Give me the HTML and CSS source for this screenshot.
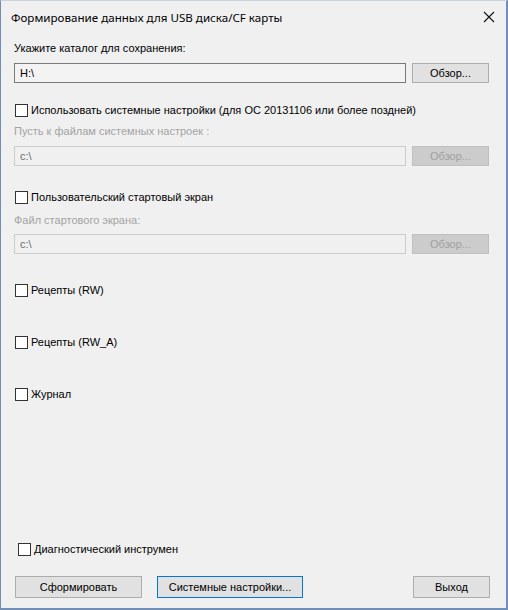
FILE: index.html
```html
<!DOCTYPE html>
<html lang="ru">

<head>
  <meta charset="UTF-8">
  <title>Формирование данных для USB диска/CF карты</title>
  <link rel="stylesheet" href="styles.css">
</head>

<body>
  <div class="window">
    <div class="titlebar">
      <span class="title">Формирование данных для USB диска/CF карты</span>
      <svg class="close" width="12" height="12" viewBox="0 0 12 12">
        <path d="M1 1 L11 11 M11 1 L1 11" stroke="#111" stroke-width="1.1" fill="none" />
      </svg>
    </div>

    <div class="content">
      <div class="label">Укажите каталог для сохранения:</div>
      <div class="path-row">
        <div class="field">H:\</div>
        <div class="btn">Обзор...</div>
      </div>

      <label class="check first-check"><span class="box"></span>Использовать системные настройки (для ОС 20131106 или более поздней)</label>
      <div class="label disabled">Пусть к файлам системных настроек :</div>
      <div class="path-row">
        <div class="field disabled">c:\</div>
        <div class="btn disabled">Обзор...</div>
      </div>

      <label class="check section-check"><span class="box"></span>Пользовательский стартовый экран</label>
      <div class="label disabled">Файл стартового экрана:</div>
      <div class="path-row tight">
        <div class="field disabled">c:\</div>
        <div class="btn disabled">Обзор...</div>
      </div>

      <label class="check recipe-check"><span class="box"></span>Рецепты (RW)</label>
      <label class="check spaced-check"><span class="box"></span>Рецепты (RW_A)</label>
      <label class="check spaced-check"><span class="box"></span>Журнал</label>

      <div class="spacer"></div>

      <label class="check diag-check"><span class="box"></span>Диагностический инструмен</label>

      <div class="footer">
        <div class="btn wide">Сформировать</div>
        <div class="btn default">Системные настройки...</div>
        <div class="btn exit">Выход</div>
      </div>
    </div>
  </div>
</body>

</html>
```

FILE: styles.css
```css
body {
  margin: 0;
  font-family: 'Liberation Sans', Arial, sans-serif;
  font-size: 11px;
  color: #000;
  background: #f0f0f0;
}

.window {
  width: 508px;
  height: 610px;
  box-sizing: border-box;
  background: #f0f0f0;
  border: 1px solid #6f8fb8;
  border-top-color: #c9d3df;
  border-right-width: 2px;
  border-bottom-width: 2px;
  display: flex;
  flex-direction: column;
}

.titlebar {
  height: 31px;
  display: flex;
  align-items: center;
  padding: 0 10px 0 10px;
  justify-content: space-between;
}

.title {
  font-family: 'Noto Sans', sans-serif;
  font-size: 11.6px;
  padding-top: 2px;
}

.close {
  margin-right: 1px;
  margin-top: 1px;
}

.content {
  flex: 1;
  display: flex;
  flex-direction: column;
  padding: 8px 17px 10px 13px;
}

.label {
  height: 16px;
  line-height: 16px;
}

.disabled {
  color: #a3a3a3;
}

.path-row {
  display: flex;
  gap: 6px;
  margin-top: 7px;
}

.path-row.tight {
  margin-top: 6px;
}

.field {
  flex: 1;
  height: 20px;
  box-sizing: border-box;
  border: 1px solid #7a7a7a;
  background: #f3f3f3;
  padding: 0 5px;
  line-height: 18px;
}

.field.disabled {
  border-color: #cccccc;
  background: #f0f0f0;
  color: #6d6d6d;
}

.btn {
  width: 77px;
  height: 20px;
  box-sizing: border-box;
  border: 1px solid #adadad;
  background: #e1e1e1;
  text-align: center;
  line-height: 18px;
}

.btn.disabled {
  background: #cccccc;
  border-color: #bfbfbf;
  color: #a0a0a0;
}

.check {
  display: flex;
  align-items: center;
  height: 16px;
}

.box {
  width: 13px;
  height: 13px;
  box-sizing: border-box;
  border: 1px solid #333;
  background: #fff;
  margin-right: 3px;
  margin-left: 1px;
}

.first-check {
  margin-top: 19px;
}

.first-check + .label {
  margin-top: 5px;
}

.path-row + .section-check {
  margin-top: 23px;
}

.section-check + .label {
  margin-top: 7px;
}

.recipe-check {
  margin-top: 28px;
}

.spaced-check {
  margin-top: 36px;
}

.spacer {
  flex: 1;
}

.diag-check {
  padding-left: 3px;
}

.footer {
  display: flex;
  gap: 15px;
  margin-top: 19px;
  padding-left: 1px;
}

.footer .btn {
  height: 22px;
  line-height: 20px;
}

.btn.wide {
  width: 127px;
}

.btn.default {
  width: 146px;
  border-color: #0078d7;
}

.btn.exit {
  margin-left: auto;
  margin-right: -1px;
}
```
